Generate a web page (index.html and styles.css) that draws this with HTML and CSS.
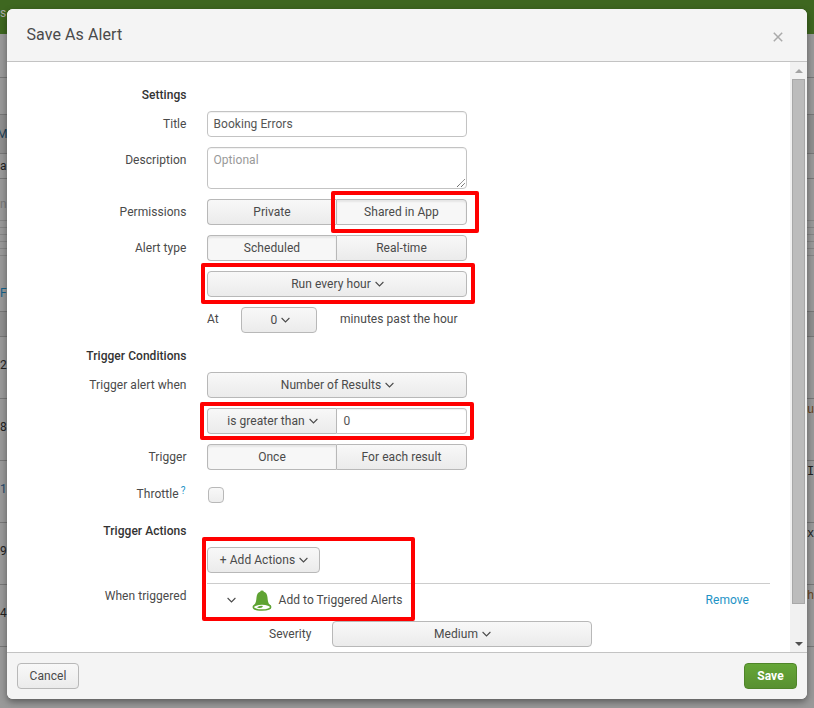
FILE: index.html
```html
<!DOCTYPE html>
<html lang="en">
<head>
<meta charset="utf-8">
<title>Save As Alert</title>
<link rel="stylesheet" href="styles.css">
</head>
<body>
<svg width="0" height="0" class="defs"><symbol id="chev" viewBox="0 0 9 6"><path d="M.6 1 4.5 4.9 8.400 1" fill="none" stroke="currentColor" stroke-width="1.100"/></symbol></svg>
<div class="page">
  <div class="bar"><span class="l">s</span></div>
  <div class="r h44"></div>
  <div class="r h37"></div>
  <div class="r h39 shade blue"><span class="l back">M</span></div>
  <div class="r h25"><span class="l">a</span></div>
  <div class="r chart"><span class="l dim">n</span><div class="lines"><i></i><i></i><i></i><i></i><i></i><i></i></div><span class="l link">Fo</span></div>
  <div class="r h25 shade"></div>
  <div class="r h62"><span class="l">2</span></div>
  <div class="r h62"><span class="l">8</span><span class="m brown">u</span></div>
  <div class="r h62"><span class="l navy">1</span><span class="m">I</span></div>
  <div class="r h62"><span class="l">9</span><span class="m">x</span></div>
  <div class="r h62"><span class="l">4</span><span class="m brown">h</span></div>
</div>

<div class="modal">
  <header class="head"><h1>Save As Alert</h1><svg class="close" viewBox="0 0 10 10"><path d="M.8.8 9.2 9.2M9.2.8.8 9.2" stroke="#aaa" stroke-width="1.5"/></svg></header>
  <div class="body">
    <div class="form">
      <h2>Settings</h2>
      <div class="row"><label>Title</label><div class="input">Booking Errors</div></div>
      <div class="row"><label>Description</label><div class="input area">Optional<svg class="grip" viewBox="0 0 8 8"><path d="M0 8 8 0M4 8 8 4" stroke="#555" stroke-width="1" stroke-dasharray="1.2 .4"/></svg></div></div>
      <div class="row"><label>Permissions</label><div class="group"><div class="btn first">Private</div><div class="btn last on">Shared in App</div><div class="mark m1"></div></div></div>
      <div class="row"><label>Alert type</label><div class="group"><div class="btn first on">Scheduled</div><div class="btn last">Real-time</div></div></div>
      <div class="row"><label></label><div class="group"><div class="btn full">Run every hour<svg class="chev"><use href="#chev"/></svg></div><div class="mark m2"></div></div></div>
      <div class="row"><label></label><div class="group wide"><span class="at">At</span><div class="btn num">0<svg class="chev"><use href="#chev"/></svg></div><span class="past">minutes past the hour</span></div></div>
      <h2>Trigger Conditions</h2>
      <div class="row"><label>Trigger alert when</label><div class="btn full">Number of Results<svg class="chev"><use href="#chev"/></svg></div></div>
      <div class="row"><label></label><div class="group"><div class="btn first">is greater than<svg class="chev"><use href="#chev"/></svg></div><div class="input val">0</div><div class="mark m3"></div></div></div>
      <div class="row"><label>Trigger</label><div class="group"><div class="btn first on">Once</div><div class="btn last">For each result</div></div></div>
      <div class="row throttle"><label>Throttle<sup>?</sup></label><div class="check"></div></div>
      <h2>Trigger Actions</h2>
      <div class="actions">
        <div class="row"><label></label><div class="btn add">+ Add Actions<svg class="chev"><use href="#chev"/></svg></div></div>
        <div class="row trig"><label>When triggered</label>
          <div class="panel">
            <div class="alert"><svg class="chev open"><use href="#chev"/></svg>
              <svg class="bell" viewBox="0 0 20 21"><path d="M8.2 1.8Q8.2.4 10 .4t1.8 1.4C14.300 2.500 15.200 4.500 15.500 7.500C15.800 11.500 16.200 13 18 15.200Q19 16.500 18 17.500Q14 14.300 10 14.300T1.800 17.500Q1 16.500 2 15.200C3.800 13 4.200 11.500 4.500 7.500C4.800 4.500 5.700 2.500 8.200 1.800Z" fill="#5fa333"/><ellipse cx="10" cy="17.100" rx="8.700" ry="3" fill="#fff" stroke="#5fa333" stroke-width="1.500"/><path d="M5 17.400Q7 15.300 11 16Q10.500 18.300 7 18Z" fill="#5fa333"/></svg>
              <span class="name">Add to Triggered Alerts</span><a class="remove">Remove</a></div>
            <div class="sev"><label>Severity</label><div class="btn full">Medium<svg class="chev"><use href="#chev"/></svg></div></div>
          </div>
        </div>
        <div class="mark m4"></div>
      </div>
    </div>
    <div class="scroll"><div class="arrow up"></div><div class="thumb"></div><div class="arrow down"></div></div>
  </div>
  <footer class="foot"><div class="btn cancel">Cancel</div><div class="btn save">Save</div></footer>
</div>
</body>
</html>
```

FILE: styles.css
```css
* { box-sizing: border-box; }
body { margin: 0; width: 814px; height: 708px; overflow: hidden; position: relative; background: #999; font: 12px/26px Roboto, "Liberation Sans", sans-serif; letter-spacing: .05px; color: #4a4a4a; }
.defs { position: absolute; }
.page { height: 708px; color: #222; }
.bar { height: 34px; background: #3e6720; color: #aaa; line-height: 27px; }
.r { display: flex; justify-content: space-between; border-bottom: 1px solid #777; }
.l { display: flex; width: 7px; }
.back { margin-left: -3px; }
.m { width: 7px; font-family: "Liberation Mono", monospace; margin-left: auto; }
.h44 { height: 44px; }
.h37 { height: 37px; }
.h39 { height: 39px; line-height: 38px; }
.h25 { height: 25px; line-height: 24px; }
.h62 { height: 62px; line-height: 56px; }
.h62 .m { line-height: 22px; }
.shade { background: #8f8f8f; }
.chart { height: 133px; flex-direction: column; justify-content: flex-start; padding-top: 12px; }
.dim { color: #777; }
.lines { display: flex; flex-direction: column; gap: 6px; padding: 3px 0 24px; }
.lines i { height: 1px; background: #858585; }
.chart .link { color: #14628a; }
.blue { color: #1c3f58; }
.navy { color: #27496d; }
.brown { color: #6b4520; }

.modal { position: absolute; left: 7px; top: 9px; width: 800px; height: 690px; display: flex; flex-direction: column; background: #fff; border-radius: 6px; overflow: hidden; box-shadow: 0 3px 7px rgba(0,0,0,.4); }
.head { height: 53px; background: #f4f4f4; border-bottom: 1px solid #c3c3c3; display: flex; justify-content: space-between; padding: 0 24px 0 19.5px; }
h1 { margin: 0; font-size: 16px; font-weight: 400; line-height: 51px; letter-spacing: .08px; }
.close { width: 10px; height: 10px; margin-top: 23px; }
.body { height: 590px; display: flex; overflow: hidden; }
.form { width: 783px; padding-top: 23px; }
h2 { margin: 0 0 6px; width: 180px; padding-right: .5px; text-align: right; font-size: 12px; font-weight: 500; line-height: 20px; color: #333; }
.row { display: flex; gap: 20px; margin-bottom: 10px; }
.row + h2 { margin-top: 13px; }
.row label { width: 180px; padding-right: .5px; text-align: right; }
.row:has(+ h2) { margin-bottom: 0; }
.input { width: 260px; height: 26px; border: 1px solid #c3c3c3; border-radius: 4px; padding: 0 5.5px; line-height: 24px; color: #555; box-shadow: inset 0 1px 1px rgba(0,0,0,.06); background: #fff; }
.area { height: 42px; color: #999; position: relative; }
.grip { position: absolute; right: 1px; bottom: 1px; width: 8px; height: 8px; }
.group { display: flex; position: relative; width: 260px; }
.wide { width: auto; }
.btn { height: 26px; border: 1px solid #b8b8b8; border-radius: 4px; background: linear-gradient(#f8f8f8, #ebebeb); display: flex; align-items: center; justify-content: center; line-height: 24px; white-space: nowrap; }
.full { width: 260px; }
.first { width: 129px; border-right: 0; border-radius: 4px 0 0 4px; }
.last { width: 131px; border-radius: 0 4px 4px 0; }
.on { background: #f7f7f7; box-shadow: inset 0 2px 2px rgba(0,0,0,.07); }
.val { width: 131px; padding-left: 6.5px; border-radius: 0 4px 4px 0; border-left-color: #b8b8b8; }
.chev { width: 9px; height: 6px; margin: 0 -1px 0 4px; flex: none; }
.at { width: 34px; line-height: 24px; }
.num { width: 76px; padding-left: 2px; }
.past { margin-left: 23px; line-height: 24px; }
.throttle { height: 28px; padding-top: 1px; }
sup { color: #1e93c6; font-size: 10px; line-height: 0; vertical-align: 4px; margin: 0 1px 0 2px; }
.check { width: 16px; height: 16px; margin: 6px 0 0 1px; border: 1px solid #b8b8b8; border-radius: 4px; background: linear-gradient(#f8f8f8, #ededed); }
.actions { position: relative; }
.add { width: 113px; }
.trig { margin: 0; }
.panel { width: 563px; border-top: 1px solid #ccc; }
.alert { height: 37px; display: flex; align-items: center; padding: 0 21px 5px 19.5px; }
.open { margin: 0; }
.bell { width: 20px; height: 21px; margin: 1px 6.5px 0 16.5px; }
.remove { margin-left: auto; color: #1e93c6; }
.sev { display: flex; gap: 20px; }
.row .sev label { width: 105px; }
.mark { position: absolute; border: 4px solid #f00; border-radius: 2px; }
.m1 { left: 124px; top: -8px; width: 148px; height: 42px; }
.m2 { left: -6px; top: -8px; width: 274px; height: 41px; }
.m3 { left: -7px; top: -6px; width: 274px; height: 38px; }
.m4 { left: 195px; top: -10px; width: 213px; height: 84px; }
.scroll { width: 17px; background: #f1f1f1; display: flex; flex-direction: column; align-items: center; justify-content: space-between; padding: 7px 0 6px; }
.arrow { border: 4px solid transparent; width: 0; height: 0; }
.up { border-top: 0; border-bottom-color: #a3a3a3; }
.down { border-bottom: 0; border-top-color: #505050; }
.thumb { width: 13px; height: 525px; background: #bcbcbc; border: 1px solid #a8a8a8; margin: 6px 0 auto; }
.foot { height: 47px; flex: none; background: #f4f4f4; border-top: 1px solid #c3c3c3; display: flex; justify-content: space-between; padding: 10px; }
.cancel { width: 62px; }
.save { width: 53px; color: #fff; font-weight: 700; background: linear-gradient(#65a637, #589030); border-color: #4f8529; }
```
